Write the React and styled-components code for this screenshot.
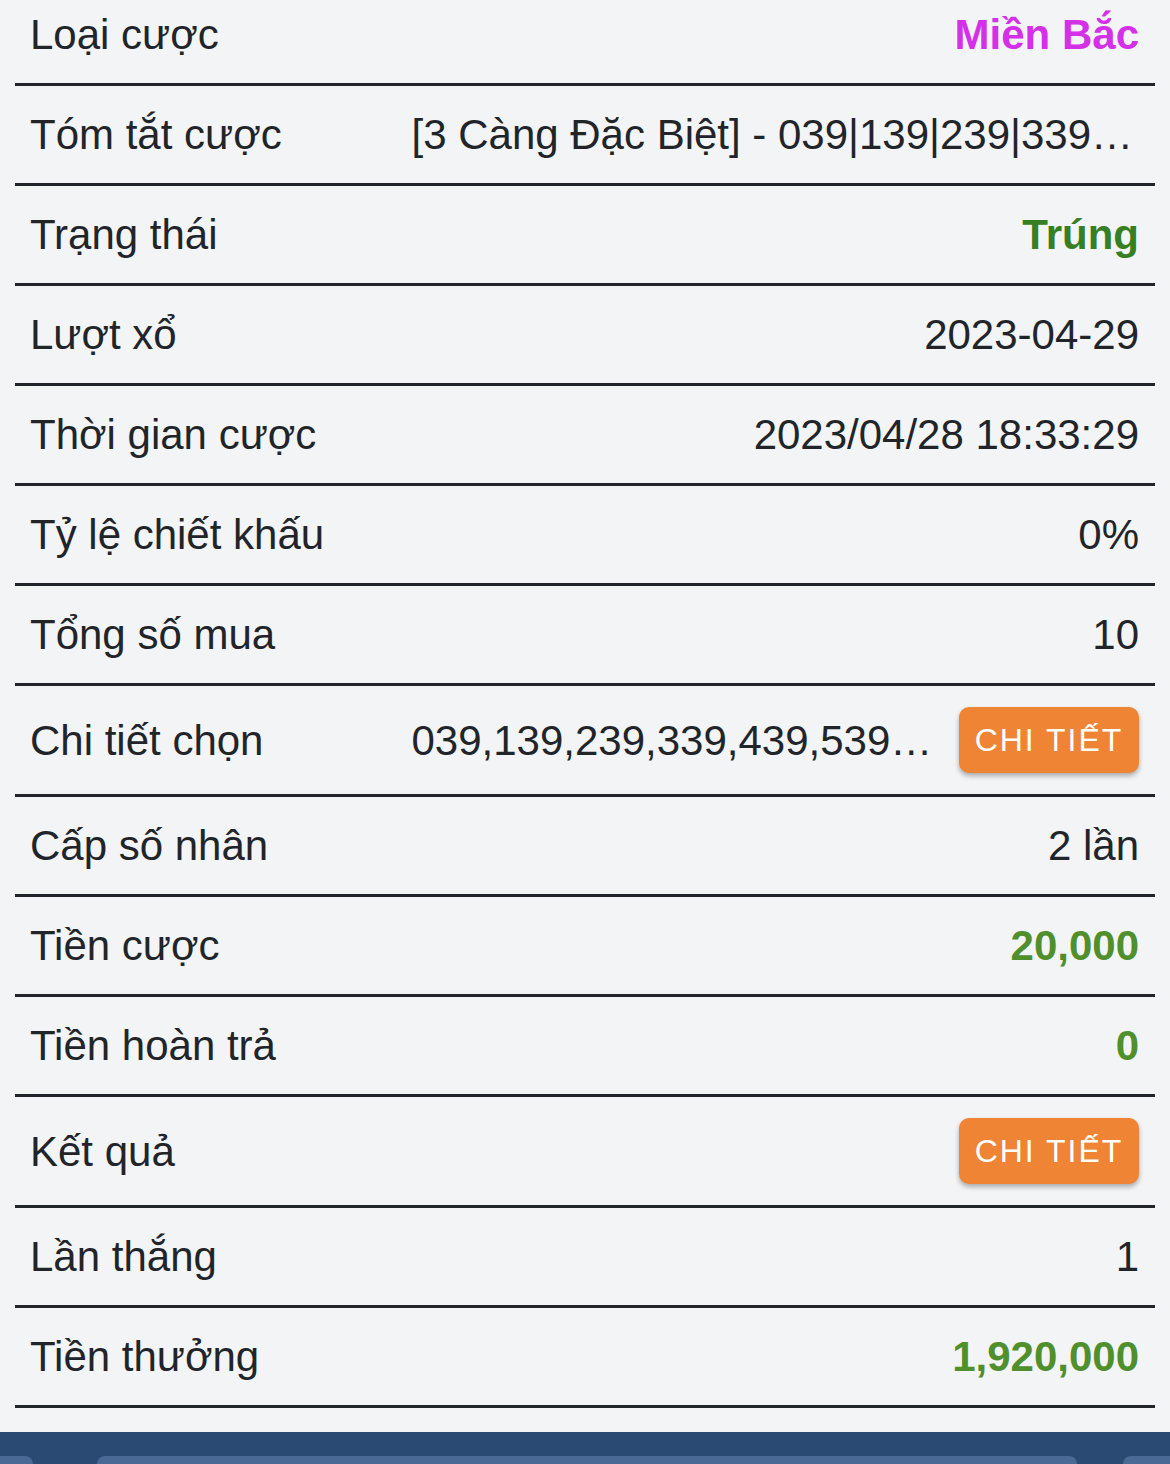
import React from 'react';
import styled, { createGlobalStyle } from 'styled-components';

const GlobalStyle = createGlobalStyle`
  html, body {
    margin: 0;
    padding: 0;
    background: #f3f4f6;
  }
  body {
    font-family: "Liberation Sans", Arial, Helvetica, sans-serif;
    color: #212529;
    overflow: hidden;
  }
`;

const Page = styled.div`
  height: 1464px;
  display: flex;
  flex-direction: column;
  overflow: hidden;
  background: #f3f4f6;
`;

const List = styled.div`
  flex: 1;
  margin-top: -14px;
  padding: 0 15px;
`;

const Row = styled.div`
  display: flex;
  align-items: center;
  justify-content: space-between;
  gap: 24px;
  padding: 21px 16px 21px 15px;
  min-height: ${(p) => (p.$hasButton ? '66px' : '55px')};
  border-bottom: 3px solid #212529;
`;

const Label = styled.div`
  font-size: 42px;
  line-height: 55px;
  white-space: nowrap;
  flex-shrink: 0;
`;

const ValueCell = styled.div`
  display: flex;
  align-items: center;
  justify-content: flex-end;
  gap: 19px;
  min-width: 0;
  max-width: 65.6%;
`;

const Value = styled.div`
  font-size: 42px;
  line-height: 55px;
  white-space: nowrap;
  overflow: hidden;
  text-overflow: ellipsis;
  min-width: 0;
  font-weight: ${(p) => (p.$color ? 700 : 400)};
  color: ${(p) => p.$color || '#212529'};
`;

const DetailButton = styled.button`
  flex-shrink: 0;
  height: 66px;
  width: 180px;
  border: none;
  border-radius: 10px;
  background: #ee8434;
  color: #fff;
  font-family: "Liberation Sans", Arial, sans-serif;
  font-size: 32px;
  letter-spacing: 2px;
  text-transform: uppercase;
  box-shadow: 0 3px 5px rgba(0, 0, 0, 0.3);
  padding: 0;
`;

const Footer = styled.div`
  margin-top: 23px;
  height: 32px;
  flex-shrink: 0;
  background: #2a4a73;
  display: flex;
  align-items: flex-end;
  overflow: hidden;
`;

const Tab = styled.div`
  height: 8px;
  background: #4a6a95;
  border-radius: 24px 24px 0 0;
  margin-left: ${(p) => p.$left}px;
  width: ${(p) => p.$width}px;
  flex-shrink: 0;
`;

const MAGENTA = '#d430e8';
const DARK_GREEN = '#367f24';
const GREEN = '#4f8f2c';

const rows = [
  { label: 'Loại cược', value: 'Miền Bắc', color: MAGENTA },
  { label: 'Tóm tắt cược', value: '[3 Càng Đặc Biệt] - 039|139|239|339|439|539|639|739|839|939' },
  { label: 'Trạng thái', value: 'Trúng', color: DARK_GREEN },
  { label: 'Lượt xổ', value: '2023-04-29' },
  { label: 'Thời gian cược', value: '2023/04/28 18:33:29' },
  { label: 'Tỷ lệ chiết khấu', value: '0%' },
  { label: 'Tổng số mua', value: '10' },
  { label: 'Chi tiết chọn', value: '039,139,239,339,439,539,639,739,839,939', button: true },
  { label: 'Cấp số nhân', value: '2 lần' },
  { label: 'Tiền cược', value: '20,000', color: GREEN },
  { label: 'Tiền hoàn trả', value: '0', color: GREEN },
  { label: 'Kết quả', button: true },
  { label: 'Lần thắng', value: '1' },
  { label: 'Tiền thưởng', value: '1,920,000', color: GREEN },
];

export default function App() {
  return (
    <>
      <GlobalStyle />
      <Page>
        <List>
          {rows.map((r) => (
            <Row key={r.label} $hasButton={r.button}>
              <Label>{r.label}</Label>
              <ValueCell>
                {r.value && <Value $color={r.color}>{r.value}</Value>}
                {r.button && <DetailButton>Chi tiết</DetailButton>}
              </ValueCell>
            </Row>
          ))}
        </List>
        <Footer>
          <Tab $left={-20} $width={53} />
          <Tab $left={64} $width={980} />
          <Tab $left={46} $width={80} />
        </Footer>
      </Page>
    </>
  );
}
